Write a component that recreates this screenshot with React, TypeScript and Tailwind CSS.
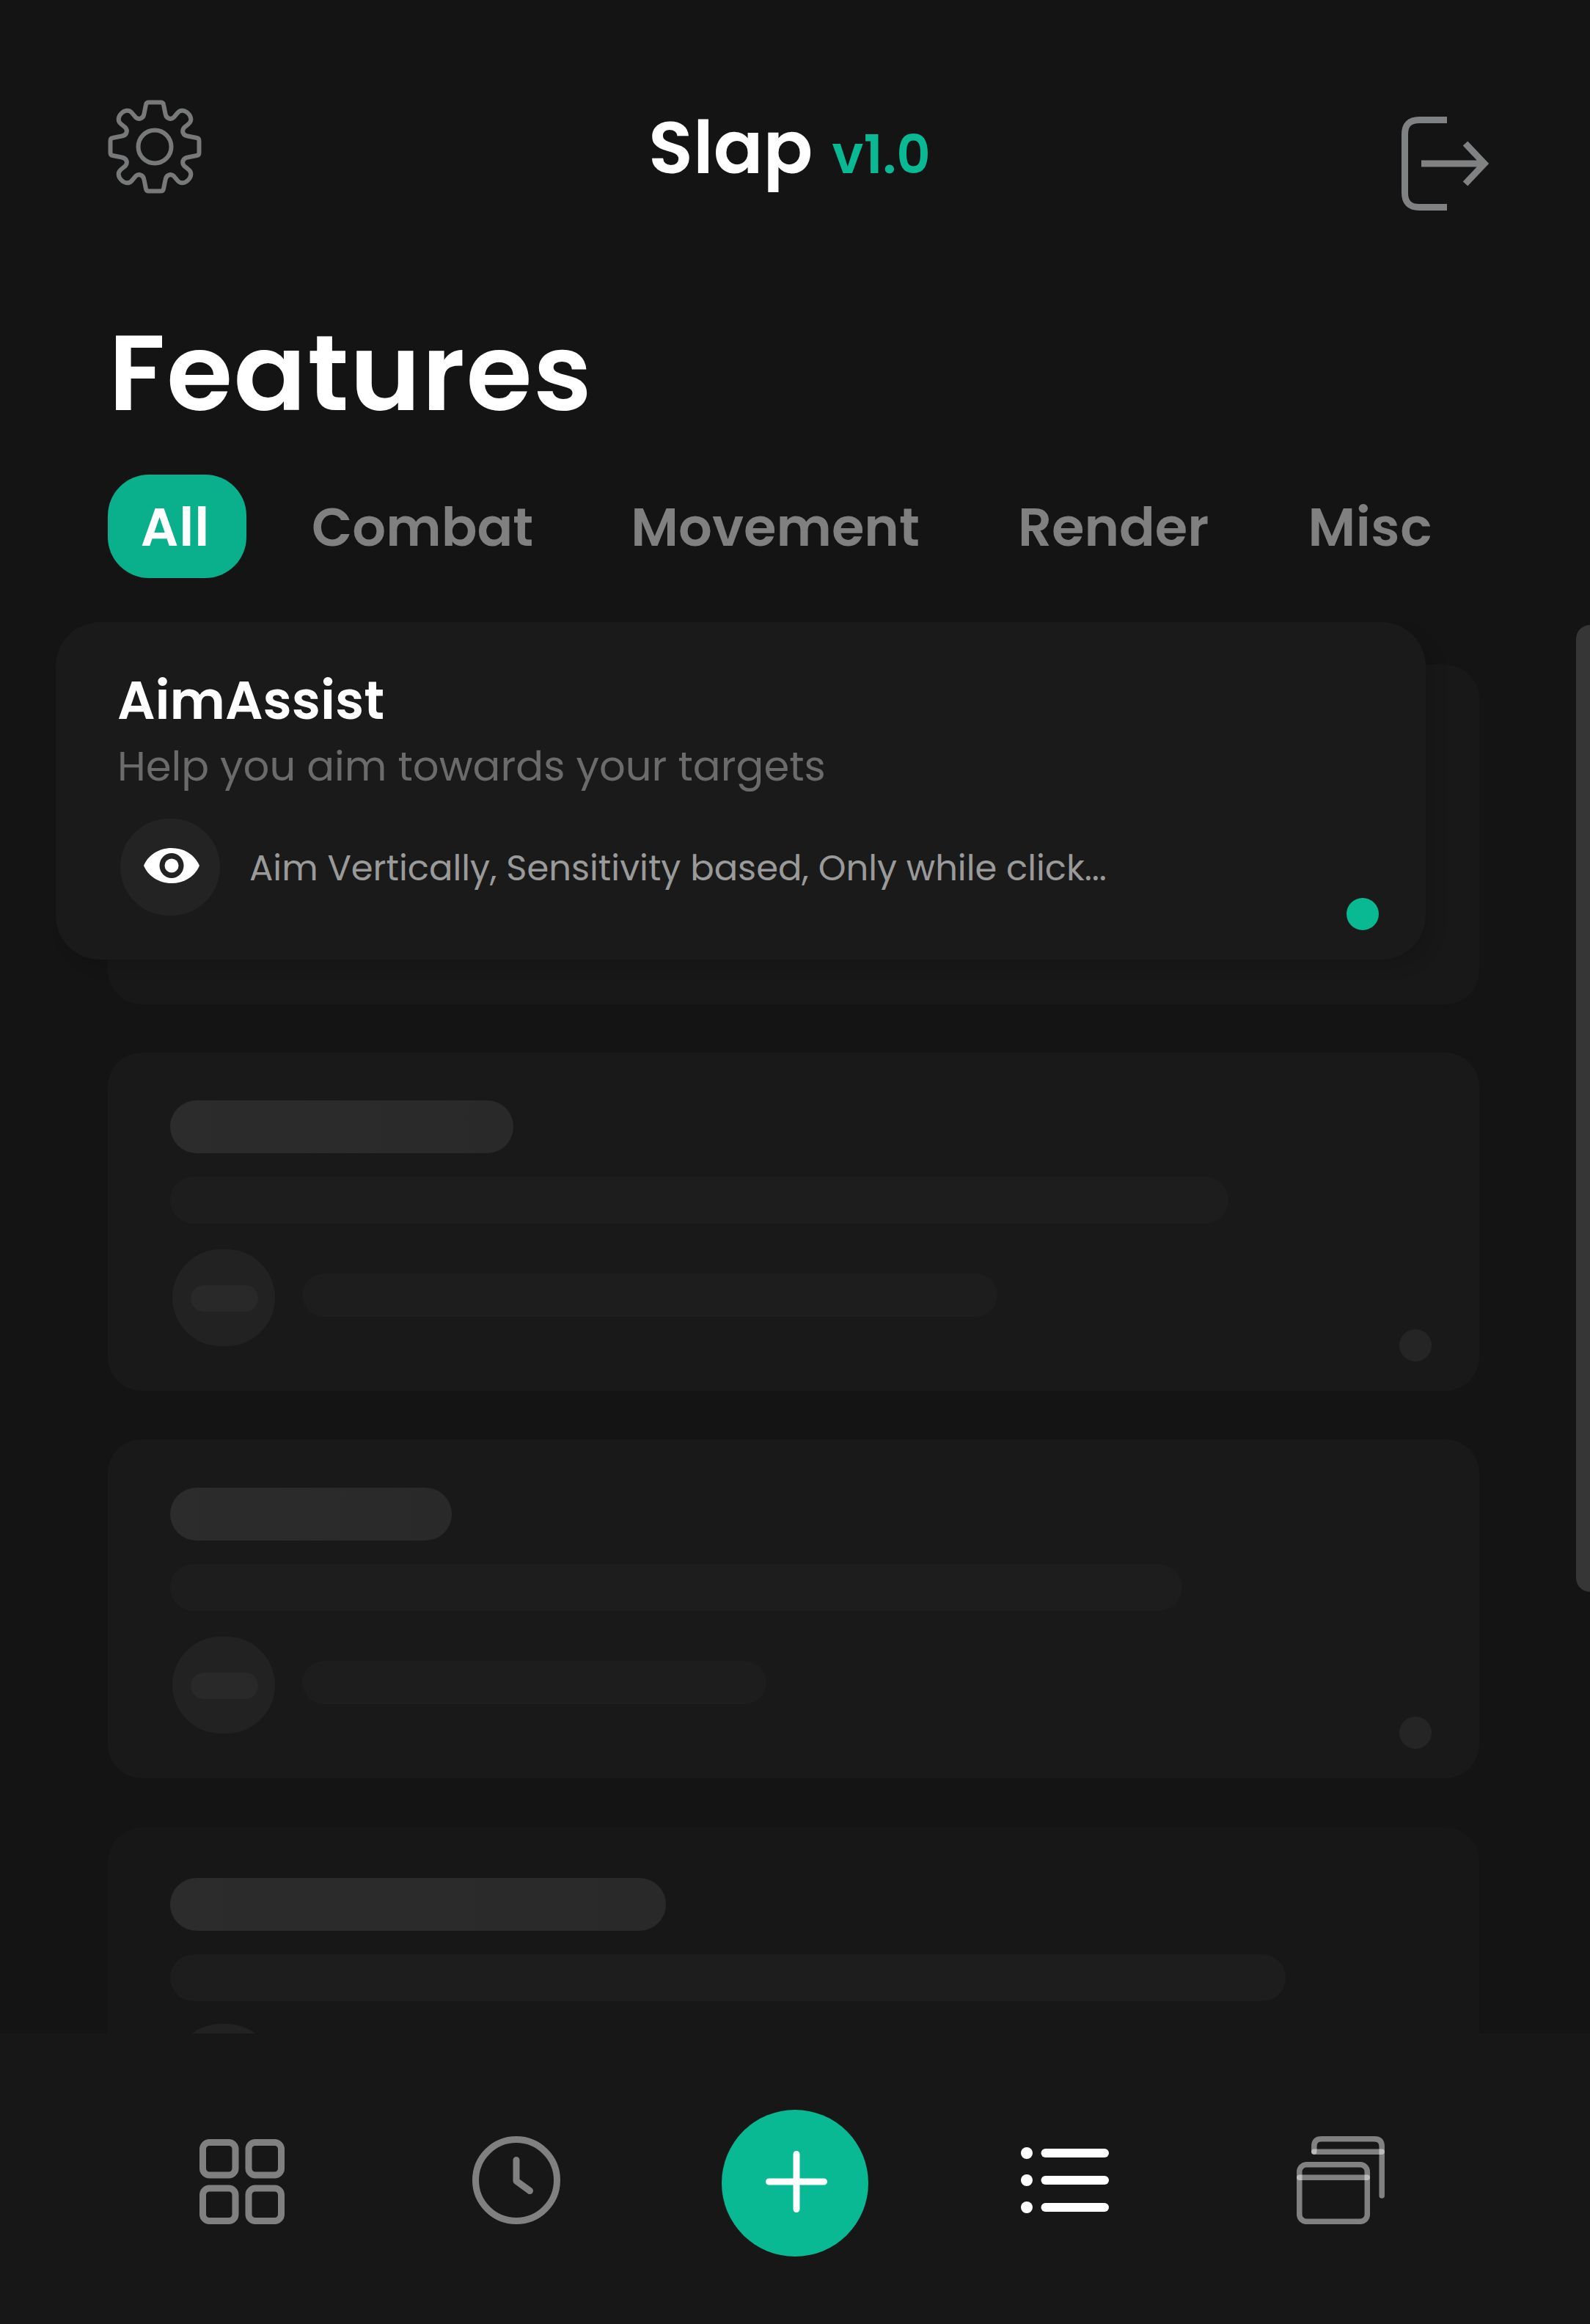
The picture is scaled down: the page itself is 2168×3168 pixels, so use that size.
function GearIcon() {
  const quarter =
    "M0 -60.500H8Q11.500 -60.500 12 -57.500L14.500 -45C15.500 -38 22 -36.500 26 -40L31 -46C35 -51 41 -50 45.500 -45.500C50 -41 51 -35 46 -31L40 -26C36.500 -22 38 -15.500 45 -14.500L57.500 -12Q60.500 -11.500 60.500 -8V0";
  return (
    <svg className="h-[128px] w-[128px]" viewBox="-64 -64 128 128" fill="none" stroke="#78797a" strokeWidth="6">
      {[0, 90, 180, 270].map((angle) => (
        <path key={angle} d={quarter} transform={`rotate(${angle})`} />
      ))}
      <circle r="22.500" />
    </svg>
  );
}

function LogoutIcon() {
  return (
    <svg className="h-[128px] w-[120px]" viewBox="0 0 120 128" fill="none" stroke="#808182" strokeWidth="9">
      <path d="M62 4.500H24Q4.500 4.500 4.500 24V104Q4.500 123.500 24 123.500H62" />
      <path d="M27 64H112M87 36.500L113 64L87 91.500" />
    </svg>
  );
}

function EyeIcon() {
  return (
    <svg className="h-[48px] w-[76px]" viewBox="0 0 76 48">
      <path fill="#fff" fillRule="evenodd" d="M38 0C56 0 70 10 76 24C70 38 56 48 38 48C20 48 6 38 0 24C6 10 20 0 38 0ZM38 7A16.500 17 0 1 0 38 41A16.500 17 0 1 0 38 7Z" />
      <circle cx="38" cy="24" r="9.500" fill="#fff" />
    </svg>
  );
}

function GridIcon() {
  return (
    <svg className="h-[120px] w-[120px]" viewBox="0 0 120 120" fill="none" stroke="#808080" strokeWidth="9">
      <rect x="6.500" y="8.500" width="44.500" height="44.500" rx="9" />
      <rect x="69" y="8.500" width="44.500" height="44.500" rx="9" />
      <rect x="6.500" y="71" width="44.500" height="44.500" rx="9" />
      <rect x="69" y="71" width="44.500" height="44.500" rx="9" />
    </svg>
  );
}

function ClockIcon() {
  return (
    <svg className="h-[120px] w-[120px]" viewBox="0 0 120 120" fill="none" stroke="#808080" strokeWidth="9" strokeLinecap="round" strokeLinejoin="round">
      <circle cx="60" cy="60" r="55.500" />
      <path d="M60 32.500V61L78.500 74.500" />
    </svg>
  );
}

function PlusIcon() {
  return (
    <svg className="mb-[4px] ml-[4px] h-[84px] w-[84px]" viewBox="0 0 84 84" stroke="#fff" strokeWidth="9" strokeLinecap="round">
      <path d="M42 4.500V79.500M4.500 42H79.500" />
    </svg>
  );
}

function ListIcon() {
  return (
    <svg className="h-[120px] w-[120px]" viewBox="0 0 120 120" fill="#fff">
      {[23, 60, 97].map((y) => (
        <g key={y}>
          <circle cx="8" cy={y} r="8" />
          <rect x="27.500" y={y - 6} width="92.500" height="12" rx="6" />
        </g>
      ))}
    </svg>
  );
}

function WindowsIcon() {
  return (
    <svg className="h-[120px] w-[120px]" viewBox="0 0 120 120" fill="none" stroke="#fff" strokeOpacity="0.46" strokeWidth="7.500" strokeLinecap="round">
      <path d="M23.800 21V14Q23.800 3.800 34 3.800H106Q116.200 3.800 116.200 14V81" />
      <path d="M23.800 21.300H116.200" />
      <rect x="3.800" y="38.800" width="92.500" height="77.500" rx="9.500" />
      <path d="M3.800 56.300H96.200" />
    </svg>
  );
}

type SkeletonProps = { card: string; title: string; line: string; row: string; detail: string };

function SkeletonCard({ card, title, line, row, detail }: SkeletonProps) {
  return (
    <div className={`relative flex w-[1870px] shrink-0 flex-col rounded-[46px] pl-[85px] ${card}`}>
      <div className={`h-[72px] shrink-0 rounded-[36px] bg-linear-to-r from-[#2c2c2c] to-[#292929] ${title}`} />
      <div className={`mt-[32px] h-[64px] shrink-0 rounded-[32px] bg-[#1d1d1d] ${line}`} />
      <div className={`flex h-[132px] shrink-0 items-center pl-[3px] ${row}`}>
        <div className="flex h-[132px] w-[140px] items-center justify-center rounded-[66px] bg-[#222222]">
          <div className="mt-[2px] ml-[2px] h-[36px] w-[92px] rounded-[18px] bg-[#292929]" />
        </div>
        <div className={`mb-[7px] ml-[37px] h-[59px] rounded-[30px] bg-[#1d1d1d] ${detail}`} />
      </div>
      <div className="absolute right-[65px] bottom-[40px] h-[44px] w-[44px] rounded-full bg-[#252525]" />
    </div>
  );
}

export default function App() {
  return (
    <div className="flex h-[3168px] w-[2168px] flex-col overflow-hidden bg-[#141414] font-[Poppins,Inter,sans-serif] text-white">
      <header className="flex h-[420px] shrink-0 items-start pl-[147px]">
        <div className="mt-[136px]">
          <GearIcon />
        </div>
        <div className="mt-[141px] ml-[609px] flex w-[461px] items-baseline leading-[120px] whitespace-nowrap">
          <span className="text-[100px] font-semibold">Slap</span>
          <span className="ml-[26px] text-[72px] font-semibold text-[#08b993]">v1.0</span>
        </div>
        <div className="mt-[159px] ml-[566px]">
          <LogoutIcon />
        </div>
      </header>
      <h1 className="h-[227px] shrink-0 pl-[148px] text-[146px] leading-[176px] font-semibold tracking-[1.5px]">Features</h1>
      <nav className="flex h-[201px] shrink-0 items-start pl-[147px] text-[72px] leading-[143px] font-semibold whitespace-nowrap text-[#808080]">
        <span className="flex h-[141px] w-[189px] justify-center rounded-[56px] bg-[#0ab08b] pr-[5px] tracking-[1px] text-white">All</span>
        <span className="ml-[89px]">Combat</span>
        <span className="ml-[133px]">Movement</span>
        <span className="ml-[134px]">Render</span>
        <span className="ml-[135px] tracking-[0.6px]">Misc</span>
      </nav>
      <main className="relative flex h-[1924px] shrink-0 flex-col overflow-hidden pl-[147px]">
        <div className="relative mt-[58px] h-[463px] w-[1870px] shrink-0 rounded-[46px] bg-[#181818]">
          <section className="absolute -top-[58px] -left-[71px] flex h-[460px] w-[1868px] flex-col rounded-[60px] bg-[#1a1a1a] pl-[84px] shadow-[12px_12px_20px_rgba(0,0,0,0.1)]">
            <h2 className="mt-[62px] text-[72px] leading-[90px] font-semibold">AimAssist</h2>
            <p className="text-[56px] leading-[90px] text-[#6b6b6b]">Help you aim towards your targets</p>
            <div className="mt-[26px] ml-[4px] flex items-center">
              <div className="flex h-[132px] w-[136px] items-center justify-center rounded-[66px] bg-[#232323] pb-[4px] pl-[4px]">
                <EyeIcon />
              </div>
              <p className="ml-[40px] pt-[4px] text-[48px] text-[#9a9a9a]">Aim Vertically, Sensitivity based, Only while click...</p>
            </div>
            <div className="absolute right-[64px] bottom-[40px] h-[44px] w-[44px] rounded-full bg-[#08b991]" />
          </section>
        </div>
        <SkeletonCard card="mt-[66px] h-[461px] bg-[#191919] pt-[65px]" title="w-[468px]" line="w-[1443px]" row="mt-[35px]" detail="w-[948px]" />
        <SkeletonCard card="mt-[66px] h-[462px] bg-[#191919] pt-[66px]" title="w-[384px]" line="w-[1380px]" row="mt-[35px]" detail="w-[633px]" />
        <SkeletonCard card="mt-[67px] h-[461px] bg-[#171717] pt-[69px]" title="w-[676px]" line="w-[1521px]" row="mt-[31px]" detail="w-[800px]" />
        <div className="absolute top-[4px] right-0 h-[1318px] w-[19px] rounded-l-[19px] bg-[#363636]" />
      </main>
      <footer className="flex h-[396px] shrink-0 items-start bg-[#171717] pt-[140px] pl-[270px]">
        <GridIcon />
        <div className="ml-[254px]">
          <ClockIcon />
        </div>
        <div className="-mt-[36px] ml-[220px] flex h-[200px] w-[200px] items-center justify-center rounded-full bg-[#08b993]">
          <PlusIcon />
        </div>
        <div className="ml-[208px]">
          <ListIcon />
        </div>
        <div className="ml-[256px]">
          <WindowsIcon />
        </div>
      </footer>
    </div>
  );
}
